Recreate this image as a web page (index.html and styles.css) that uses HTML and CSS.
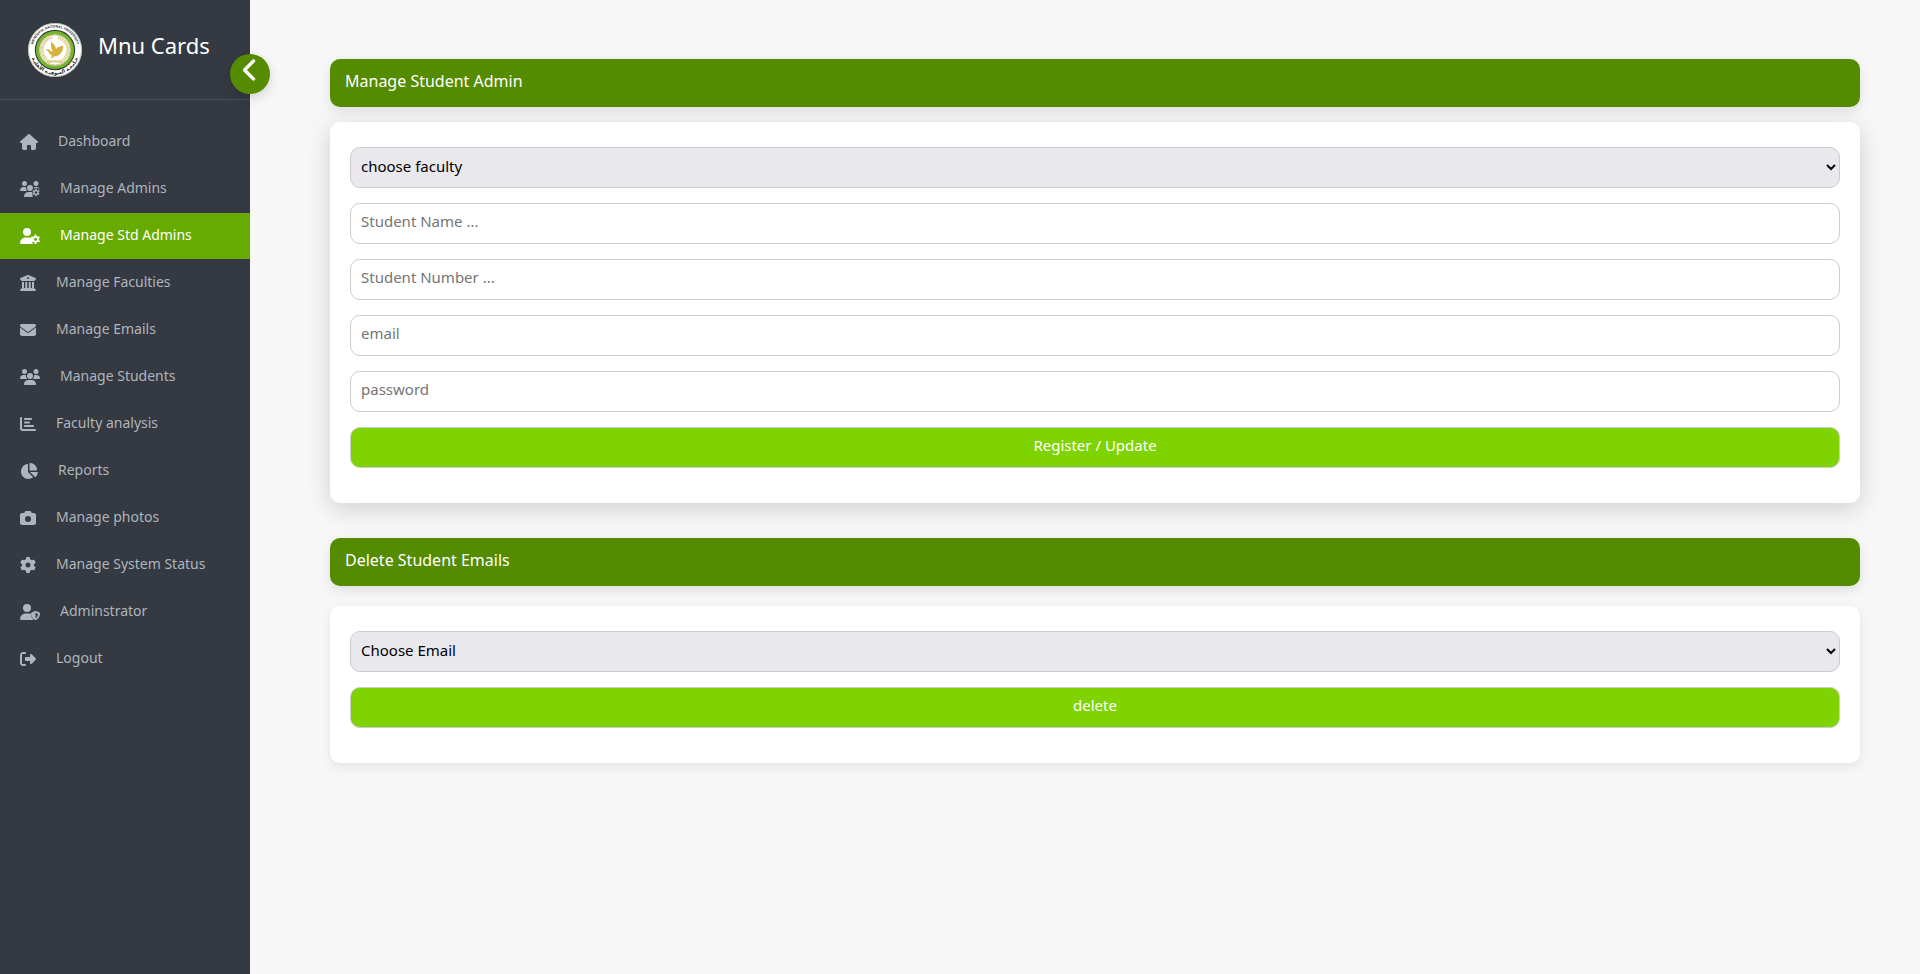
FILE: index.html
```
<!DOCTYPE html>
<html lang="en">
<head>
<meta charset="utf-8">
<title>Mnu Cards</title>
<link rel="stylesheet" href="styles.css">
</head>
<body>
<aside class="sidebar">
  <header class="brand">
    <svg class="logo" viewBox="0 0 108 108" aria-hidden="true">
      <defs>
        <path id="arc-top" d="M9 54a45 45 0 0 1 90 0"/>
        <path id="arc-bottom" d="M5 54a49 49 0 0 0 98 0"/>
      </defs>
      <circle cx="54" cy="54" r="54" fill="#fff"/>
      <circle cx="54" cy="54" r="53" fill="none" stroke="#8b9a80"/>
      <text class="seal"><textPath href="#arc-top" startOffset="50%" text-anchor="middle">MENOUFIA NATIONAL UNIVERSITY</textPath></text>
      <text class="seal seal-ar"><textPath href="#arc-bottom" startOffset="50%" text-anchor="middle">جـامعـة المنوفيـة الأهليـة</textPath></text>
      <g transform="scale(2)">
        <circle cx="27" cy="27" r="20.2" fill="#39423a"/>
        <circle cx="27" cy="27" r="19" fill="#78b42c"/>
        <circle cx="27" cy="27" r="15.600" fill="#fff"/>
        <circle cx="27" cy="27" r="15" fill="none" stroke="#c9b98a" stroke-width=".8"/>
        <path d="M24 14.500a12.800 12.800 0 0 0-2 24.200M30 14.500a12.800 12.800 0 0 1 2 24.200" fill="none" stroke="#dfca84" stroke-width="2.800" stroke-dasharray="1.500 .7"/>
        <path d="M20 39.500q7-2.500 14 0" fill="none" stroke="#dfca84" stroke-width="2"/>
        <path d="M23.500 18.800c2.500 2.200 4 4.500 4.500 7.200 1.500-1.900 4-3 7.300-3.300-.2 4.300-1.600 8-5.300 9.800-1.300.8-2.700.9-3.800.8l-2.700 2.400c-.5-1.300-.2-2.400.5-3.200-1.900-.8-3.300-2.200-3.800-4.500l-2.200-1c1-1.200 2.700-1.300 3.800.1 1 1.400 2 1.700 3 1.300-1.900-2.600-2.300-6-1.300-9.600z" fill="#d6b23c"/>
      </g>
    </svg>
    <span class="brand-name">Mnu Cards</span>
    <button class="toggle" type="button" aria-label="Collapse menu">
      <svg viewBox="0 0 320 512" aria-hidden="true"><path d="M9.400 233.400c-12.500 12.500-12.500 32.800 0 45.300l192 192c12.500 12.500 32.800 12.500 45.300 0s12.500-32.800 0-45.300L77.300 256 246.600 86.600c12.500-12.500 12.500-32.800 0-45.300s-32.800-12.500-45.300 0l-192 192z"/></svg>
    </button>
  </header>
  <nav class="menu">
    <a href="#"><svg viewBox="0 0 576 512"><path d="M575.800 255.500c0 18-15 32.100-32 32.100h-32l.7 160.200c0 35.300-28.700 64.200-64 64.200H392c-22.100 0-40-17.900-40-40v-88c0-17.700-14.300-32-32-32h-64c-17.700 0-32 14.300-32 32v88c0 22.100-17.900 40-40 40h-56c-35.300 0-64-28.700-64-64V287.600H32c-18 0-32-14-32-32.100 0-9 3-17 10-24L266.400 8c7-7 15-8 22-8s15 2 21 7l255.400 224.500c8 7 12 15 11 24z"/></svg><span>Dashboard</span></a>
    <a href="#"><svg viewBox="0 0 640 512"><path d="M144 160a80 80 0 1 0 0-160 80 80 0 1 0 0 160zm368 0a80 80 0 1 0 0-160 80 80 0 1 0 0 160zM0 298.700C0 310.400 9.600 320 21.300 320h213.400c-25.900-23.500-42.700-57.800-42.700-96 0-7.600.7-15 1.900-22.300-13.600-6.300-28.700-9.700-44.600-9.700h-42.600C47.800 192 0 239.800 0 298.700zM320 320c24 0 45.900-8.800 62.700-23.300a81 81 0 0 1 16.500-21.400c10.600-14.600 16.800-32.500 16.800-51.300a96 96 0 1 0-96 96zm77.300 124.700c-11-22-10-38 5-52l-8-12c-3-14-2-24 3-29-12-5-26-0-41-0h-72.600C190.700 352 128 414.700 128 490.700c0 11.800 9.500 21.300 21.300 21.300H421c-13-15-25-35-23.700-67.300zM533 192c-33 0-61 4-85 16v16c0 12-2 24-5 35 20-6 35-22 40-30h104c15 12 29 35 49 50-7-50-49-87-103-87z"/><path fill-rule="evenodd" d="M491 249h43l7 35 29 17 34-12 22 38-27 23v34l27 24-22 37-34-11-29 16-7 36h-43l-7-36-29-16-34 11-22-37 27-24v-34l-27-23 22-38 34 12 29-17zm22 76a42 42 0 1 0 0 84 42 42 0 0 0 0-84z"/></svg><span>Manage Admins</span></a>
    <a class="active" href="#" aria-current="page"><svg viewBox="0 0 640 512"><path d="M224 256a128 128 0 1 0 0-256 128 128 0 1 0 0 256zm-45.700 48C79.800 304 0 383.800 0 482.300 0 498.700 13.300 512 29.700 512h392.600l4-1c-14-12-28-35-44-65-9-22 0-41 13-51l10-9c-18-14-25-30-18-51l6-14c-28-11-58-17-90-17z"/><path fill-rule="evenodd" d="M472 205h49l10 49 38 22 47-16 24 43-37 33v44l37 33-24 43-47-16-38 22-10 50h-49l-10-50-38-22-47 16-24-43 37-33v-44l-37-33 24-43 47 16 38-22zm24 105a48 48 0 1 0 0 96 48 48 0 0 0 0-96z"/></svg><span>Manage Std Admins</span></a>
    <a href="#"><svg viewBox="0 0 512 512"><path fill-rule="evenodd" d="M243.400 2.600l-224 96c-14 6-21.800 21-18.700 35.800S16.800 160 32 160v8c0 13.300 10.700 24 24 24h400c13.300 0 24-10.700 24-24v-8c15.200 0 28.300-10.700 31.300-25.600s-4.800-29.900-18.700-35.800l-224-96c-8-3.400-17.200-3.400-25.200 0zM128 224H64v196.300l-2.600 1.600-48 32c-11.700 7.800-17 22.400-12.900 35.900S17.900 512 32 512h448c14.100 0 26.500-9.200 30.600-22.700s-1.100-28.100-12.900-35.900l-48-32-1.700-1.100V224h-64v192h-40V224h-64v192h-48V224h-64v192h-40V224zM256 64a32 32 0 1 1 0 64 32 32 0 1 1 0-64z"/></svg><span>Manage Faculties</span></a>
    <a href="#"><svg viewBox="0 0 512 512"><path d="M48 64C21.500 64 0 85.500 0 112c0 15.100 7.100 29.300 19.200 38.400l217.600 163.200c11.400 8.500 27 8.500 38.400 0l217.600-163.200c12.100-9.100 19.200-23.300 19.200-38.400 0-26.500-21.500-48-48-48H48zM0 176v208c0 35.300 28.700 64 64 64h384c35.300 0 64-28.700 64-64V176L294.400 339.200c-22.800 17.100-54 17.100-76.800 0L0 176z"/></svg><span>Manage Emails</span></a>
    <a href="#"><svg viewBox="0 0 640 512"><path d="M144 0a80 80 0 1 1 0 160 80 80 0 1 1 0-160zm368 0a80 80 0 1 1 0 160 80 80 0 1 1 0-160zM0 298.700C0 239.800 47.800 192 106.700 192h42.700c15.900 0 31 3.500 44.600 9.700-1.300 7.200-1.900 14.700-1.900 22.300 0 38.200 16.800 72.500 43.300 96H21.300C9.600 320 0 310.400 0 298.700zM405.300 320h-.7c26.600-23.500 43.300-57.800 43.300-96 0-7.600-.7-15-1.900-22.300 13.600-6.300 28.700-9.700 44.600-9.700h42.700c58.900 0 106.700 47.800 106.700 106.700 0 11.800-9.600 21.300-21.300 21.300H405.300zM224 224a96 96 0 1 1 192 0 96 96 0 1 1-192 0zM128 485.300C128 411.700 187.700 352 261.300 352h117.400C452.300 352 512 411.700 512 485.300c0 14.700-11.900 26.700-26.700 26.700H154.700c-14.700 0-26.700-11.900-26.700-26.700z"/></svg><span>Manage Students</span></a>
    <a href="#"><svg viewBox="0 0 512 512"><path d="M32 32c17.700 0 32 14.300 32 32v336c0 8.800 7.200 16 16 16h400c17.700 0 32 14.300 32 32s-14.300 32-32 32H80c-44.200 0-80-35.800-80-80V64c0-17.700 14.300-32 32-32zm96 64c0-17.700 14.300-32 32-32h192c17.700 0 32 14.300 32 32s-14.300 32-32 32H160c-17.700 0-32-14.300-32-32zm32 80h128c17.700 0 32 14.300 32 32s-14.300 32-32 32H160c-17.700 0-32-14.300-32-32s14.300-32 32-32zm0 112h256c17.700 0 32 14.300 32 32s-14.300 32-32 32H160c-17.700 0-32-14.300-32-32s14.300-32 32-32z"/></svg><span>Faculty analysis</span></a>
    <a href="#"><svg viewBox="0 0 576 512"><path d="M304 240V16.600c0-9 7-16.600 16-16.600 123.700 0 224 100.300 224 224 0 9-7.600 16-16.600 16H304zM32 272C32 150.700 122.100 50.300 239 34.300c9.200-1.300 17 6.100 17 15.400V288l156.500 156.500c6.700 6.700 6.200 17.700-1.500 23.100C371.800 495.600 323.800 512 272 512 139.500 512 32 404.600 32 272zm526.400 16c9.300 0 16.600 7.800 15.400 17-7.700 55.900-34.600 105.600-73.900 142.300-6 5.600-15.400 5.200-21.200-.7L320 288h238.400z"/></svg><span>Reports</span></a>
    <a href="#"><svg viewBox="0 0 512 512"><path fill-rule="evenodd" d="M149.100 64.800L138.700 96H64c-35.300 0-64 28.700-64 64v256c0 35.300 28.700 64 64 64h384c35.300 0 64-28.700 64-64V160c0-35.300-28.700-64-64-64h-74.700l-10.400-31.200C356.400 45.200 338.100 32 317.400 32H194.600c-20.700 0-39 13.200-45.500 32.800zM256 192a96 96 0 1 1 0 192 96 96 0 1 1 0-192z"/></svg><span>Manage photos</span></a>
    <a href="#"><svg viewBox="0 0 512 512"><path fill-rule="evenodd" d="M495.900 166.600c3.200 8.700.5 18.400-6.400 24.600l-43.300 39.400c1.100 8.300 1.700 16.800 1.700 25.400s-.6 17.100-1.700 25.400l43.300 39.400c6.900 6.200 9.600 15.900 6.400 24.600-4.400 11.900-9.700 23.300-15.800 34.300l-4.700 8.100c-6.600 11-14 21.400-22.100 31.200-5.900 7.200-15.700 9.600-24.500 6.800l-55.700-17.700c-13.400 10.300-28.200 18.900-44 25.400l-12.500 57.100c-2 9.100-9 16.300-18.200 17.800-13.800 2.300-28 3.500-42.500 3.500s-28.700-1.200-42.500-3.500c-9.200-1.500-16.200-8.700-18.200-17.800l-12.500-57.100c-15.800-6.500-30.600-15.100-44-25.400L83.100 425.900c-8.800 2.800-18.600.3-24.500-6.800-8.100-9.800-15.500-20.200-22.100-31.200l-4.700-8.100c-6.100-11-11.400-22.400-15.800-34.300-3.200-8.700-.5-18.400 6.400-24.600l43.300-39.400C64.600 273.100 64 264.600 64 256s.6-17.100 1.700-25.400l-43.300-39.400c-6.900-6.200-9.600-15.900-6.400-24.600 4.400-11.900 9.700-23.300 15.800-34.300l4.700-8.100c6.600-11 14-21.400 22.100-31.200 5.900-7.200 15.700-9.600 24.500-6.800l55.700 17.700c13.400-10.300 28.200-18.900 44-25.400l12.500-57.100c2-9.100 9-16.300 18.200-17.800C227.300 1.200 241.500 0 256 0s28.700 1.200 42.500 3.500c9.200 1.500 16.200 8.700 18.200 17.800l12.500 57.100c15.800 6.500 30.600 15.100 44 25.400l55.700-17.700c8.800-2.800 18.600-.3 24.500 6.800 8.100 9.800 15.500 20.200 22.100 31.200l4.700 8.100c6.100 11 11.400 22.400 15.800 34.300zM256 336a80 80 0 1 0 0-160 80 80 0 1 0 0 160z"/></svg><span>Manage System Status</span></a>
    <a href="#"><svg viewBox="0 0 640 512"><path d="M224 256a128 128 0 1 0 0-256 128 128 0 1 0 0 256zm-45.700 48C79.800 304 0 383.800 0 482.300 0 498.700 13.300 512 29.700 512h392.600c5 0 10-1 14-3-48-44-84-100-84-173v-20c-16-8-50-12-80-12z"/><path fill-rule="evenodd" d="M496 224c5 0 9 1 13 3l114 46c10 4 17 13 17 24 0 79-32 171-131 213-8 3-18 3-26 0-99-42-131-134-131-213 0-11 7-20 17-24l114-46c4-2 8-3 13-3zm0 58v171c52-27 75-78 79-136z"/></svg><span>Adminstrator</span></a>
    <a href="#"><svg viewBox="0 0 512 512"><path d="M377.900 105.900l122.800 122.800c7.200 7.200 11.300 17.100 11.300 27.300s-4.100 20.100-11.300 27.300L377.900 406.100c-6.400 6.400-15 9.900-24 9.900-18.700 0-33.900-15.200-33.900-33.900V320H192c-17.700 0-32-14.300-32-32v-64c0-17.700 14.300-32 32-32h128v-62.100c0-18.700 15.200-33.900 33.900-33.900 9 0 17.600 3.600 24 9.900zM160 96H96c-17.700 0-32 14.300-32 32v256c0 17.700 14.300 32 32 32h64c17.700 0 32 14.300 32 32s-14.300 32-32 32H96c-53 0-96-43-96-96V128c0-53 43-96 96-96h64c17.700 0 32 14.300 32 32s-14.300 32-32 32z"/></svg><span>Logout</span></a>
  </nav>
</aside>
<main class="content">
  <section class="block">
    <h2 class="bar">Manage Student Admin</h2>
    <form class="card raised">
      <select class="field" aria-label="Faculty"><option>choose faculty</option></select>
      <input class="field" type="text" placeholder="Student Name ..." aria-label="Student name">
      <input class="field" type="text" placeholder="Student Number ..." aria-label="Student number">
      <input class="field" type="email" placeholder="email" aria-label="Email">
      <input class="field" type="password" placeholder="password" aria-label="Password">
      <button class="field submit" type="button">Register / Update</button>
    </form>
  </section>
  <section class="block spaced">
    <h2 class="bar">Delete Student Emails</h2>
    <form class="card">
      <select class="field" aria-label="Email to delete"><option>Choose Email</option></select>
      <button class="field submit" type="button">delete</button>
    </form>
  </section>
</main>
</body>
</html>
```
FILE: styles.css
```
* {
  box-sizing: border-box;
}

body {
  display: flex;
  min-height: 100vh;
  margin: 0;
  background: #f7f7f7;
  font-family: "Noto Sans", "Open Sans", sans-serif;
}

.sidebar {
  flex: 0 0 250px;
  background: #353941;
}

.brand {
  position: relative;
  display: flex;
  align-items: center;
  gap: 16px;
  height: 100px;
  padding-left: 28px;
  border-bottom: 1px solid #4b4f58;
}

.logo {
  width: 54px;
  height: 54px;
  overflow: visible;
}

.seal {
  fill: #222;
  font-family: "Liberation Sans", "DejaVu Sans", sans-serif;
  font-size: 7px;
  font-weight: 700;
}

.seal-ar {
  font-size: 10px;
}

.brand-name {
  padding-bottom: 10px;
  color: #fff;
  font-size: 22px;
}

.toggle {
  position: absolute;
  top: 54px;
  right: -20px;
  display: flex;
  justify-content: center;
  width: 40px;
  height: 40px;
  padding: 4px 0 0;
  border: 0;
  border-radius: 50%;
  background: #558b00;
  box-shadow: 0 4px 12px rgba(0, 0, 0, 0.15);
}

.toggle svg {
  width: 15px;
  height: 24px;
  fill: #fff;
  stroke: #fff;
  stroke-width: 12;
}

.menu {
  display: flex;
  flex-direction: column;
  gap: 1px;
  padding-top: 19px;
}

.menu a {
  display: flex;
  align-items: center;
  gap: 20px;
  height: 46px;
  padding-left: 20px;
  color: #adb5bd;
  font-size: 14px;
  text-decoration: none;
}

.menu svg {
  height: 16px;
  fill: currentColor;
}

.menu span {
  padding-bottom: 4px;
}

.menu .active {
  background: #67ab00;
  color: #fff;
}

.content {
  flex: 1;
  padding: 59px 60px 59px 80px;
}

.block {
  display: flex;
  flex-direction: column;
  gap: 15px;
}

.spaced {
  gap: 20px;
  margin-top: 35px;
}

.bar {
  margin: 0;
  padding: 10px 15px 14px;
  border-radius: 10px;
  background: #558b00;
  box-shadow: 0 4px 12px rgba(0, 0, 0, 0.1);
  color: #fff;
  font-size: 16px;
  font-weight: 400;
  line-height: 24px;
}

.card {
  display: flex;
  flex-direction: column;
  gap: 15px;
  padding: 25px 20px 35px;
  border-radius: 10px;
  background: #fff;
  box-shadow: 0 4px 12px rgba(0, 0, 0, 0.08);
}

.raised {
  box-shadow: 0 6px 24px rgba(0, 0, 0, 0.16);
}

.field {
  width: 100%;
  height: 41px;
  padding: 5px 10px 11px;
  border: 1px solid #ccc;
  border-radius: 10px;
  background: #fff;
  font-family: inherit;
  font-size: 15px;
}

select.field {
  padding: 5px 1px 9px 6px;
  background: #e9e8ed;
  color: #000;
}

.submit {
  background: #7ed300;
  color: #fff;
}
```
